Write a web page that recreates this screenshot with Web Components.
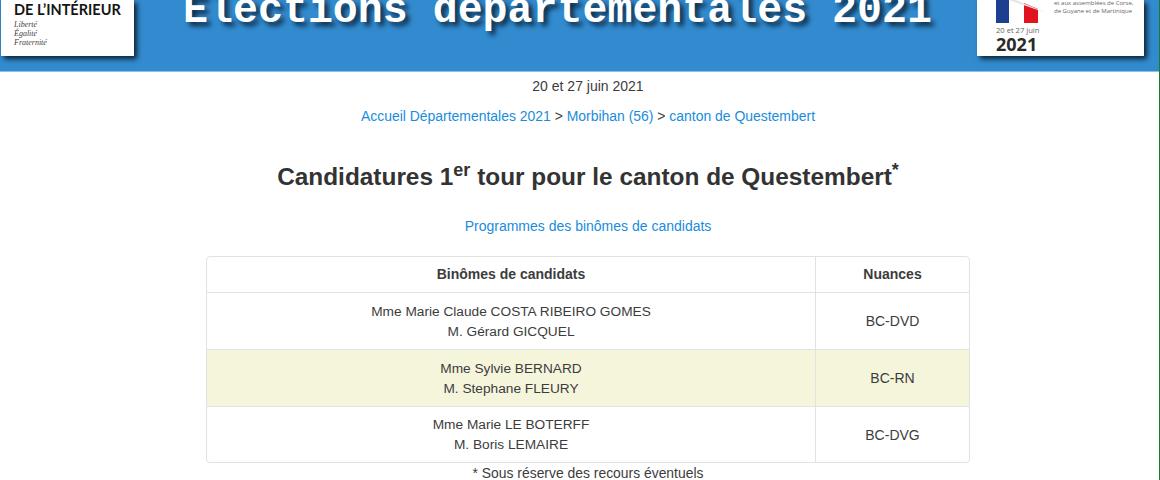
<!DOCTYPE html>
<html lang="fr">
<head>
<meta charset="utf-8">
<title>Candidatures</title>
<style>
html, body { margin: 0; background: #fff; height: 480px; overflow: hidden; }
body {
    font-family: "Liberation Sans", Arial, sans-serif;
    font-size: 14px;
    color: #3c3c3c;
    box-sizing: border-box;
    border-right: 1px solid #1e7a2e;
}
</style>
</head>
<body>
<site-header title-text="Élections départementales 2021"></site-header>
<page-main></page-main>

<script>
class SiteHeader extends HTMLElement {
    constructor(){
        super()
        this.attachShadow({ mode: "open" })
    }

    connectedCallback(){
        this.shadowRoot.innerHTML = `
            <style>
            :host {
                display: flex;
                justify-content: space-between;
                align-items: flex-end;
                height: 72px;
                background: #338bcf;
                border-bottom: 1px solid #8ebfe8;
                overflow: hidden;
                padding: 0 15px 15px 0;
                box-sizing: border-box;
            }
            .logo {
                background: #fff;
                box-shadow: 3px 3px 5px #0b2233;
                flex: none;
                position: relative;
            }
            .left {
                width: 133px;
                height: 56px;
                margin-left: 1px;
                padding: 3px 0 0 13px;
                box-sizing: border-box;
                color: #151515;
            }
            .left b {
                display: block;
                font: 700 14.5px/14px "Lato", sans-serif;
                white-space: nowrap;
            }
            .left i {
                display: block;
                font: italic 8px/9px "Liberation Serif", serif;
                color: #444;
            }
            .left .motto { margin-top: 3px; }
            h1 {
                margin: -9px 0 0 4px;
                flex: none;
                align-self: flex-start;
                font: 700 41.6px/39px "Liberation Mono", monospace;
                color: #fff;
                text-shadow: 4px 4px 5px #0b2a45;
                white-space: nowrap;
            }
            .right {
                width: 167px;
                height: 56px;
                overflow: hidden;
                color: #222;
            }
            .flag {
                position: absolute;
                left: 19px;
                top: 0;
            }
            .when {
                position: absolute;
                left: 19px;
                top: 25px;
                font: 7.6px/10px "Open Sans", sans-serif;
                color: #666;
                white-space: nowrap;
            }
            .year {
                position: absolute;
                left: 19px;
                top: 36px;
                font: 700 18px/16px "Open Sans", sans-serif;
                color: #2a2a2a;
            }
            .note {
                position: absolute;
                left: 77px;
                top: 0;
                font: 6px/7.5px "Open Sans", sans-serif;
                color: #666;
                white-space: nowrap;
            }
            </style>
            <div class="logo left">
                <b>DE L’INTÉRIEUR</b>
                <div class="motto"><i>Liberté</i><i>Égalité</i><i>Fraternité</i></div>
            </div>
            <h1>${this.getAttribute("title-text")}</h1>
            <div class="logo right">
                <svg class="flag" width="60" height="24" viewBox="0 0 60 24">
                    <rect x="0" y="0" width="13" height="23" fill="#1e3f8f"/>
                    <polygon points="28,3 42,9 42,23 28,23" fill="#e1131f"/>
                    <polygon points="13,0 20,0 53,14 36,8" fill="#e6e6e6"/>
                </svg>
                <div class="when">20 et 27 juin</div>
                <div class="year">2021</div>
                <div class="note">et aux assemblées de Corse,<br>de Guyane et de Martinique</div>
            </div>
        `
    }
}

class ResultRow extends HTMLElement {
    constructor(){
        super()
        this.attachShadow({ mode: "open" })
    }

    connectedCallback(){
        this.shadowRoot.innerHTML = `
            <style>
            :host {
                display: grid;
                grid-template-columns: 608px 1fr;
                border-top: 1px solid #e2e2e2;
                height: 56px;
            }
            :host(:last-child) { height: 55px; }
            :host([highlight]) { background: #f5f5dc; }
            div {
                display: flex;
                align-items: center;
                justify-content: center;
                text-align: center;
                line-height: 20px;
            }
            .names { display: block; padding-top: 9px; font-size: 13.7px; }
            :host(:last-child) .names { padding-top: 8px; }
            .nuance { border-left: 1px solid #e2e2e2; }
            </style>
            <div class="names"><slot></slot></div>
            <div class="nuance">${this.getAttribute("nuance")}</div>
        `
    }
}

class ResultTable extends HTMLElement {
    constructor(){
        super()
        this.attachShadow({ mode: "open" })
    }

    connectedCallback(){
        this.shadowRoot.innerHTML = `
            <style>
            :host {
                display: block;
                width: 764px;
                box-sizing: border-box;
                margin: 0 auto;
                border: 1px solid #e2e2e2;
                border-radius: 4px;
                overflow: hidden;
            }
            .head {
                display: grid;
                grid-template-columns: 608px 1fr;
                height: 35px;
                font-weight: 700;
                line-height: 35px;
                text-align: center;
            }
            .head div + div { border-left: 1px solid #e2e2e2; }
            </style>
            <div class="head"><div>Binômes de candidats</div><div>Nuances</div></div>
            <slot></slot>
        `
    }
}

class PageMain extends HTMLElement {
    constructor(){
        super()
        this.attachShadow({ mode: "open" })
    }

    connectedCallback(){
        this.shadowRoot.innerHTML = `
            <style>
            :host { display: block; text-align: center; padding-left: 17px; }
            a { color: #1a8cdb; text-decoration: none; }
            p { margin: 0; line-height: 20px; }
            .date { padding-top: 4px; }
            .crumbs { margin-top: 10px; font-size: 13.95px; }
            h2 {
                margin: 38px 0 0;
                font-size: 24.4px;
                line-height: 26px;
                font-weight: 700;
                color: #333;
            }
            sup { font-size: 18px; line-height: 0; }
            .prog { margin-top: 26px; margin-bottom: 20px; }
            .foot { font-size: 13.9px; line-height: 14px; margin-top: 3px; }
            </style>
            <p class="date">20 et 27 juin 2021</p>
            <p class="crumbs"><a href="#">Accueil Départementales 2021</a> &gt; <a href="#">Morbihan (56)</a> &gt; <a href="#">canton de Questembert</a></p>
            <h2>Candidatures 1<sup>er</sup> tour pour le canton de Questembert<sup>*</sup></h2>
            <p class="prog"><a href="#">Programmes des binômes de candidats</a></p>
            <result-table>
                <result-row nuance="BC-DVD">Mme Marie Claude COSTA RIBEIRO GOMES<br>M. Gérard GICQUEL</result-row>
                <result-row nuance="BC-RN" highlight>Mme Sylvie BERNARD<br>M. Stephane FLEURY</result-row>
                <result-row nuance="BC-DVG">Mme Marie LE BOTERFF<br>M. Boris LEMAIRE</result-row>
            </result-table>
            <p class="foot">* Sous réserve des recours éventuels</p>
        `
    }
}

customElements.define("site-header", SiteHeader)
customElements.define("result-row", ResultRow)
customElements.define("result-table", ResultTable)
customElements.define("page-main", PageMain)
</script>
</body>
</html>
